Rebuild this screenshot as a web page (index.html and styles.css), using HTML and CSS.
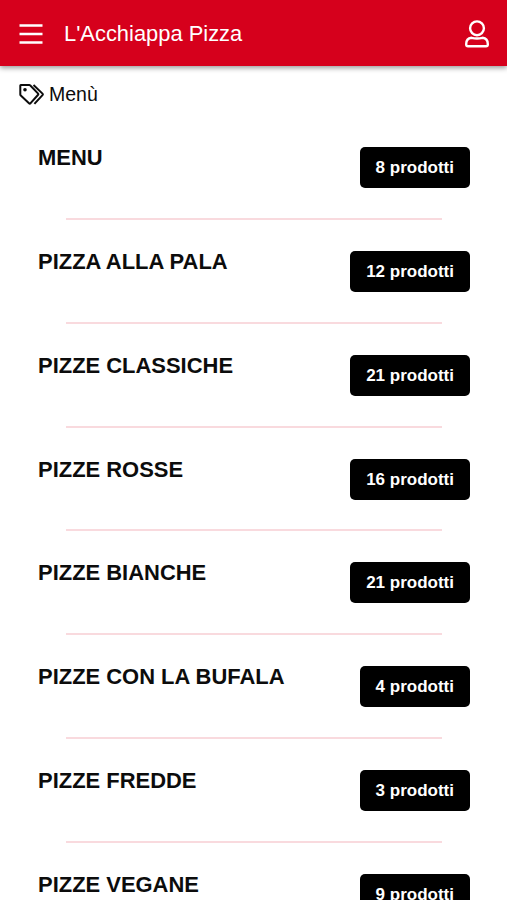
FILE: index.html
```html
<!DOCTYPE html>
<html lang="it">
<head>
<meta charset="utf-8">
<title>L'Acchiappa Pizza</title>
<link rel="stylesheet" href="styles.css">
</head>
<body>
<header class="topbar">
  <svg class="burger" viewBox="0 0 24 22"><path d="M.5 2.500h23M.5 11h23M.5 19.500h23"/></svg>
  <span class="brand">L'Acchiappa Pizza</span>
  <svg class="user" viewBox="0 0 26 28"><ellipse cx="13" cy="8.300" rx="6.900" ry="6.900"/><path d="M7.500 17.800C4 18.300 2.200 21 2.200 24v.4q0 1.800 1.800 1.800h18q1.800 0 1.800-1.800V24C23.800 21 22 18.300 18.500 17.800Q13 19.200 7.500 17.800z"/></svg>
</header>
<div class="crumb">
  <svg class="tags" viewBox="0 0 25 21"><path d="M1.800 1h8.500q.6 0 1 .5l7.600 7.900q.8.800 0 1.600l-7.300 8.200q-.8.800-1.600 0L1.800 11.600q-.5-.5-.5-1.200V1.500q0-.5.5-.5zM14.500 1l9 8.600q.7.700 0 1.500l-8.100 8.800"/><circle class="hole" cx="6" cy="5.800" r="1.800"/></svg>
  <span>Menù</span>
</div>
<main class="list">
  <section class="row"><h2>MENU</h2><span class="badge">8 prodotti</span></section>
  <section class="row"><h2>PIZZA ALLA PALA</h2><span class="badge">12 prodotti</span></section>
  <section class="row"><h2>PIZZE CLASSICHE</h2><span class="badge">21 prodotti</span></section>
  <section class="row"><h2>PIZZE ROSSE</h2><span class="badge">16 prodotti</span></section>
  <section class="row"><h2>PIZZE BIANCHE</h2><span class="badge">21 prodotti</span></section>
  <section class="row"><h2>PIZZE CON LA BUFALA</h2><span class="badge">4 prodotti</span></section>
  <section class="row"><h2>PIZZE FREDDE</h2><span class="badge">3 prodotti</span></section>
  <section class="row"><h2>PIZZE VEGANE</h2><span class="badge">9 prodotti</span></section>
</main>
</body>
</html>
```
FILE: styles.css
```css
* { box-sizing: border-box; }
html { height: 100%; overflow: hidden; }
body { margin: 0; height: 900px; overflow: hidden; background: #fff; color: #0c0c0c; font-family: "Liberation Sans", Arial, sans-serif; }
.topbar { display: flex; align-items: center; height: 66px; padding: 2px 17px 0 19px; background: #d6001c; color: #fff; box-shadow: 0 2px 5px rgba(0,0,0,.4); }
.burger { width: 24px; height: 22px; margin-right: 21px; }
.burger path { stroke: #fff; stroke-width: 2.6; }
.brand { font-size: 21.9px; line-height: 28px; white-space: nowrap; }
.user { width: 26px; height: 28px; margin-left: auto; fill: none; stroke: #fff; stroke-width: 2.4; stroke-linejoin: round; }
.crumb { display: flex; align-items: center; gap: 5px; height: 56px; padding-left: 19px; font-size: 19.5px; }
.tags { width: 25px; height: 21px; fill: none; stroke: #0c0c0c; stroke-width: 2; stroke-linejoin: round; }
.tags .hole { fill: #0c0c0c; stroke: none; }
.list { padding: 0 37px 0 38px; }
.row { position: relative; display: flex; justify-content: space-between; align-items: flex-start; height: 103.85px; padding-top: 25px; }
.row::after { content: ""; position: absolute; left: 28px; right: 28px; bottom: 6px; height: 2px; background: #f9dade; }
.row h2 { margin: 0; font-size: 21.950px; line-height: 22px; white-space: nowrap; }
.badge { height: 41px; padding: 0 16px; border-radius: 5px; background: #000; color: #fff; font-size: 17px; font-weight: 700; line-height: 41px; white-space: nowrap; }
```
